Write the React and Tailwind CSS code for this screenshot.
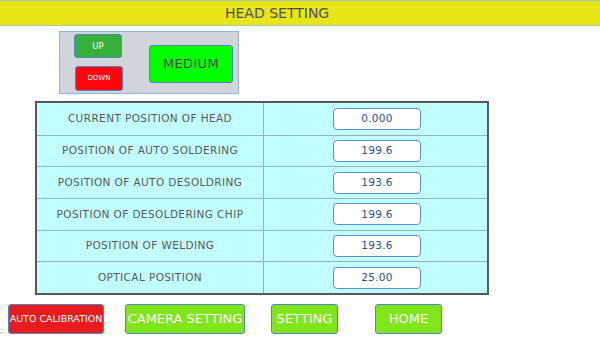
const rows = [
  ['CURRENT POSITION OF HEAD', '0.000'],
  ['POSITION OF AUTO SOLDERING', '199.6'],
  ['POSITION OF AUTO DESOLDRING', '193.6'],
  ['POSITION OF DESOLDERING CHIP', '199.6'],
  ['POSITION OF WELDING', '193.6'],
  ['OPTICAL POSITION', '25.00'],
]

export default function App() {
  return (
    <div className="w-[600px] h-[337px] bg-white overflow-hidden" style={{ fontFamily: '"DejaVu Sans", Verdana, sans-serif' }}>
      <div className="h-[26px] bg-[#e6e619] border-y border-[#a9c4b8] flex items-center pl-[225px] text-[14px] text-[#505050]">
        HEAD SETTING
      </div>

      <div className="ml-[59px] mt-[5px] w-[180px] h-[63px] bg-[#d1d4d9] border border-[#93b4dc] flex items-start">
        <div className="flex flex-col gap-[8px] pl-[14px] pt-[2px]">
          <button className="w-[48px] h-[24px] rounded-[3px] bg-[#36b03a] border border-[#4f86c8] text-white text-[8.5px]">UP</button>
          <button className="w-[48px] h-[25px] ml-[1px] rounded-[3px] bg-[#ff0510] border border-[#4f86c8] text-white text-[7px]">DOWN</button>
        </div>
        <button className="ml-[26px] mt-[13px] w-[84px] h-[38px] rounded-[3px] bg-[#00ff00] border border-[#4f86c8] text-[#4a4a4a] text-[13px] tracking-[0.3px]">MEDIUM</button>
      </div>

      <div className="ml-[35px] mt-[7px] w-[454px] border-2 border-[#585858] bg-[#c2ffff]">
        {rows.map(([label, value], i) => (
          <div key={label} className={`flex h-[31.7px] ${i > 0 ? 'border-t border-[#97b3b3]' : ''}`}>
            <div className="w-[227px] border-r border-[#97b3b3] flex items-center justify-center text-[10.5px] tracking-[0.4px] text-[#595959]">
              {label}
            </div>
            <div className="flex-1 flex items-center justify-center pl-[3px]">
              <div className="w-[88px] h-[22px] bg-white border border-[#5a8fd6] rounded-[4px] flex items-center justify-center text-[10.5px] tracking-[0.3px] text-[#2b4f8f]">
                {value}
              </div>
            </div>
          </div>
        ))}
      </div>

      <div className="flex items-center mt-[9px] ml-[8px]">
        <button className="w-[96px] h-[30px] rounded-[3px] bg-[#e81c1c] border border-[#4f86c8] text-white text-[9.5px] whitespace-nowrap">AUTO CALIBRATION</button>
        <button className="ml-[21px] w-[120px] h-[30px] rounded-[3px] bg-[#80e61a] border border-[#4f86c8] text-white text-[13px] whitespace-nowrap">CAMERA SETTING</button>
        <button className="ml-[26px] w-[67px] h-[30px] rounded-[3px] bg-[#80e61a] border border-[#4f86c8] text-white text-[13px]">SETTING</button>
        <button className="ml-[37px] w-[67px] h-[30px] rounded-[3px] bg-[#80e61a] border border-[#4f86c8] text-white text-[13px]">HOME</button>
      </div>
    </div>
  )
}
